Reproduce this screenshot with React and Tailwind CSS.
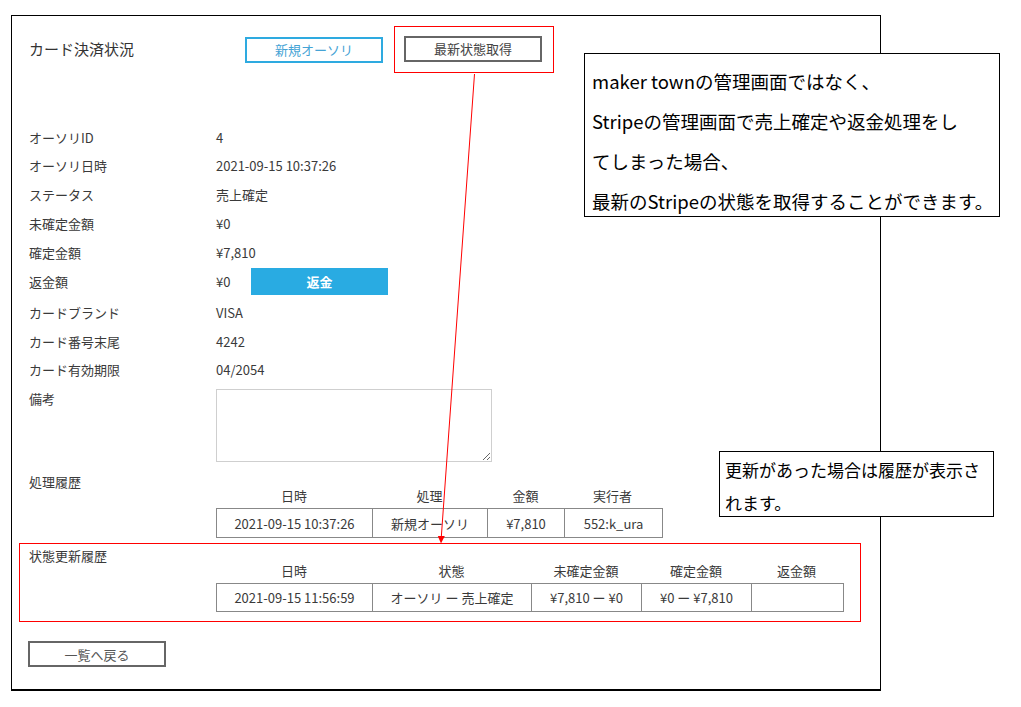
const font = { fontFamily: '"Noto Sans CJK JP", "Noto Sans", sans-serif' }

const details = [
  { label: 'オーソリID', value: '4' },
  { label: 'オーソリ日時', value: '2021-09-15 10:37:26' },
  { label: 'ステータス', value: '売上確定' },
  { label: '未確定金額', value: '¥0' },
  { label: '確定金額', value: '¥7,810' },
]

const cardRows = [
  { label: 'カードブランド', value: 'VISA' },
  { label: 'カード番号末尾', value: '4242' },
  { label: 'カード有効期限', value: '04/2054' },
]

const historyCols = [
  { head: '日時', w: 'w-[156px]', value: '2021-09-15 10:37:26' },
  { head: '処理', w: 'w-[115px]', value: '新規オーソリ' },
  { head: '金額', w: 'w-[77px]', value: '¥7,810' },
  { head: '実行者', w: 'w-[97px]', value: '552:k_ura' },
]

const stateCols = [
  { head: '日時', w: 'w-[156px]', value: '2021-09-15 11:56:59' },
  { head: '状態', w: 'w-[159px]', value: 'オーソリ ー 売上確定' },
  { head: '未確定金額', w: 'w-[110px]', value: '¥7,810 ー ¥0' },
  { head: '確定金額', w: 'w-[110px]', value: '¥0 ー ¥7,810' },
  { head: '返金額', w: 'w-[91px]', value: '' },
]

function Row({ label, children, h = 'h-[28.75px]' }) {
  return (
    <div className={`flex items-center ${h}`}>
      <div className="w-[204px] pl-[17px]">{label}</div>
      {children}
    </div>
  )
}

function HistoryTable({ cols, rowH }) {
  return (
    <div>
      <div className="flex h-[20px] items-center leading-[20px]">
        {cols.map((c) => (
          <div key={c.head} className={`${c.w} text-center`}>
            {c.head}
          </div>
        ))}
      </div>
      <div className={`mt-[2px] flex w-fit border border-[#888] ${rowH}`}>
        {cols.map((c, i) => (
          <div
            key={c.head}
            className={`${c.w} flex items-center justify-center whitespace-nowrap ${
              i < cols.length - 1 ? 'border-r border-[#888]' : ''
            }`}
          >
            {c.value}
          </div>
        ))}
      </div>
    </div>
  )
}

export default function App() {
  return (
    <div className="relative h-[707px] w-[1021px] overflow-hidden bg-white pl-[11px] pt-[15px]" style={font}>
      <div className="h-[676px] w-[870px] border border-b-2 border-black text-[13px] text-[#3a3a3a]">
        {/* header */}
        <div className="flex items-center pt-[10px]">
          <div className="w-[233px] pl-[17px] text-[15px] text-[#333]">カード決済状況</div>
          <button className="h-[26px] w-[138px] border-2 border-[#2eaae0] text-[13px] text-[#45a3d5]">
            新規オーソリ
          </button>
          <div className="ml-[11px] border border-[#f00] pb-[10px] pl-[9px] pr-[11px] pt-[9px]">
            <button className="h-[26px] w-[138px] border-2 border-[#666] text-[13px] text-[#444]">
              最新状態取得
            </button>
          </div>
        </div>

        {/* details */}
        <div className="mt-[50px]">
          {details.map((d) => (
            <Row key={d.label} label={d.label}>
              <span>{d.value}</span>
            </Row>
          ))}
          <Row label="返金額" h="h-[29px]">
            <span className="w-[35px]">¥0</span>
            <button className="h-[27px] w-[137px] bg-[#29abe2] text-[13px] font-bold text-white">返金</button>
          </Row>
          <div className="mt-[3px]">
            {cardRows.map((d) => (
              <Row key={d.label} label={d.label} h="h-[28.5px]">
                <span>{d.value}</span>
              </Row>
            ))}
          </div>
          <div className="mt-[5px] flex">
            <div className="w-[204px] pl-[17px] leading-[20px]">備考</div>
            <textarea className="h-[73px] w-[276px] resize border border-[#cfcfcf] bg-white" />
          </div>
        </div>

        {/* 処理履歴 */}
        <div className="mt-[10px] flex">
          <div className="w-[204px] pl-[17px] leading-[20px]">処理履歴</div>
          <div className="pt-[14px]">
            <HistoryTable cols={historyCols} rowH="h-[30px]" />
          </div>
        </div>

        {/* 状態更新履歴 */}
        <div className="ml-[7px] mt-[5px] flex w-[842px] border border-[#f00] pb-[9px] pt-[2px]">
          <div className="w-[196px] pl-[9px] leading-[20px]">状態更新履歴</div>
          <div className="pt-[15px]">
            <HistoryTable cols={stateCols} rowH="h-[29px]" />
          </div>
        </div>

        <button className="ml-[16px] mt-[19px] h-[26px] w-[138px] border-2 border-[#666] text-[13px] text-[#555]">
          一覧へ戻る
        </button>
      </div>

      {/* annotation arrow */}
      <svg className="pointer-events-none absolute left-0 top-0" width="1021" height="707">
        <line x1="474.5" y1="74" x2="441.3" y2="537" stroke="#f00" strokeWidth="1" />
        <polygon points="437.8,536 444.8,536 441,543.5" fill="#f00" />
      </svg>

      {/* annotation notes */}
      <div className="absolute left-[584px] top-[53px] h-[164px] w-[416px] whitespace-nowrap border border-black bg-white pl-[7px] pt-[7px] text-[18.5px] leading-[40px] text-black">
        <div>maker townの管理画面ではなく、</div>
        <div>Stripeの管理画面で売上確定や返金処理をし</div>
        <div>てしまった場合、</div>
        <div>最新のStripeの状態を取得することができます。</div>
      </div>
      <div className="absolute left-[719px] top-[451px] h-[66px] w-[275px] whitespace-nowrap border border-black bg-white pl-[5px] pt-[1px] text-[17px] leading-[33px] text-black">
        <div>更新があった場合は履歴が表示さ</div>
        <div>れます。</div>
      </div>
    </div>
  )
}
